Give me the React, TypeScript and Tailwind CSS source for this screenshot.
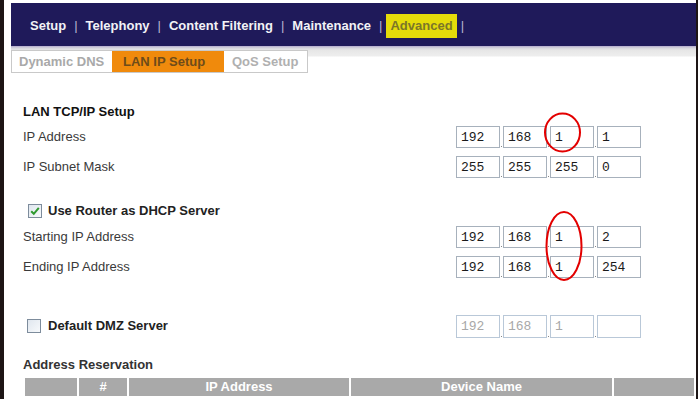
import React from "react";

function IpBox({ v, disabled }: { v: string; disabled?: boolean }) {
  return (
    <div
      className={
        "w-[44px] flex items-center pl-[4px] font-['Liberation_Mono',monospace] text-[13px] leading-none " +
        (disabled
          ? "h-[23px] border border-[#b9c8d8] text-[#a8a8a8]"
          : "h-[22px] border border-[#a7b1bc] text-[#1a1a1a]")
      }
    >
      {v}
    </div>
  );
}

function Dot() {
  return (
    <div className="w-[3px] self-stretch flex items-end justify-center">
      <div className="w-[1px] h-[1px] bg-[#888] mb-[1px]" />
    </div>
  );
}

function Ip({ parts, disabled }: { parts: string[]; disabled?: boolean }) {
  return (
    <div className="flex">
      <IpBox v={parts[0]} disabled={disabled} />
      <Dot />
      <IpBox v={parts[1]} disabled={disabled} />
      <Dot />
      <IpBox v={parts[2]} disabled={disabled} />
      <Dot />
      <IpBox v={parts[3]} disabled={disabled} />
    </div>
  );
}

function Row({ label, parts }: { label: string; parts: string[] }) {
  return (
    <div className="flex h-[30px] items-center">
      <div className="w-[433px] text-[13px] text-[#3a3a3a]">{label}</div>
      <Ip parts={parts} />
    </div>
  );
}

function Check({ checked }: { checked?: boolean }) {
  return (
    <svg width="14" height="14" viewBox="0 0 14 14" className="shrink-0">
      <defs>
        <linearGradient id={checked ? "cg1" : "cg2"} x1="0" y1="0" x2="1" y2="1">
          <stop offset="0" stopColor="#dfe6ee" />
          <stop offset="1" stopColor="#f8fafc" />
        </linearGradient>
      </defs>
      <rect x="0.5" y="0.5" width="13" height="13" fill={`url(#${checked ? "cg1" : "cg2"})`} stroke="#7d8c9c" />
      {checked && (
        <path d="M3.2 7.2 L5.8 9.8 L10.8 3.8" fill="none" stroke="#2f9a2f" strokeWidth="2" />
      )}
    </svg>
  );
}

const navItem = "px-[4px] h-[24px] flex items-center font-bold text-[13px] text-[#f2f2f6]";
const sep = "mx-[4px] text-[13px] text-[#b8b6d4]";

export default function App() {
  return (
    <div className="relative w-[699px] h-[399px] bg-white flex overflow-hidden font-['Liberation_Sans',Arial,sans-serif]">
      <div className="w-[4px] shrink-0 bg-[#1d1515]" />
      <div className="w-[692px] shrink-0 pt-[3px] pl-[7px] flex flex-col">
        {/* header */}
        <div className="h-[43px] bg-[#1f1a5a] flex items-start pt-[11px] pl-[15px]">
          <div className={navItem}>Setup</div>
          <span className={sep + " h-[24px] flex items-center"}>|</span>
          <div className={navItem}>Telephony</div>
          <span className={sep + " h-[24px] flex items-center"}>|</span>
          <div className={navItem}>Content Filtering</div>
          <span className={sep + " h-[24px] flex items-center"}>|</span>
          <div className={navItem}>Maintenance</div>
          <span className={sep + " h-[24px] flex items-center"}>|</span>
          <div className="px-[4px] h-[24px] flex items-center font-bold text-[13px] text-[#7b7628] bg-[#e5dc0a]">
            Advanced
          </div>
          <span className={sep + " h-[24px] flex items-center"}>|</span>
        </div>
        {/* tab band */}
        <div className="h-[30px] bg-[linear-gradient(to_bottom,#b2aacd_0px,#d6d6dc_2px,#e6e6e6_4px,#eeeeee_10px,#ffffff_11px)] pt-[4px]">
          <div className="flex w-[297px] h-[23px] border border-[#c9c9c9] bg-white">
            <div className="w-[100px] pl-[7px] flex items-center font-bold text-[13px] text-[#a9a9a9]">Dynamic DNS</div>
            <div className="w-[112px] pl-[11px] flex items-center font-bold text-[13px] text-[#6e4c1a] bg-[#f08a0c]">LAN IP Setup</div>
            <div className="w-[83px] pl-[8px] flex items-center font-bold text-[13px] text-[#b0b0b0]">QoS Setup</div>
          </div>
        </div>
        {/* content */}
        <div className="pl-[12px] flex flex-col">
          <div className="mt-[26px] h-[20px] leading-[19px] font-bold text-[13px] text-[#111]">LAN TCP/IP Setup</div>
          <Row label="IP Address" parts={["192", "168", "1", "1"]} />
          <Row label="IP Subnet Mask" parts={["255", "255", "255", "0"]} />
          <div className="mt-[18px] h-[22px] flex items-center pl-[5px]">
            <Check checked />
            <span className="ml-[6px] font-bold text-[13px] text-[#222]">Use Router as DHCP Server</span>
          </div>
          <Row label="Starting IP Address" parts={["192", "168", "1", "2"]} />
          <Row label="Ending IP Address" parts={["192", "168", "1", "254"]} />
          <div className="mt-[29px] h-[30px] flex items-center">
            <div className="w-[433px] flex items-center pl-[4px]">
              <Check />
              <span className="ml-[7px] font-bold text-[13px] text-[#222]">Default DMZ Server</span>
            </div>
            <Ip parts={["192", "168", "1", ""]} disabled />
          </div>
          <div className="mt-[15px] h-[18px] leading-[18px] font-bold text-[13px] text-[#333]">Address Reservation</div>
          <div className="mt-[4px] ml-[2px] flex gap-[2px] h-[18px] text-white font-bold text-[13px]">
            <div className="w-[52px] bg-[#a9a9a9]" />
            <div className="w-[48px] bg-[#a9a9a9] flex items-center justify-center">#</div>
            <div className="w-[220px] bg-[#a9a9a9] flex items-center justify-center">IP Address</div>
            <div className="w-[261px] bg-[#a9a9a9] flex items-center justify-center">Device Name</div>
            <div className="w-[80px] bg-[#a9a9a9]" />
          </div>
        </div>
      </div>
      <div className="w-[2px] shrink-0 bg-[#1d1515]" />
      <div className="w-[1px] shrink-0 bg-white" />
      {/* red annotation circles */}
      <svg className="absolute left-0 top-0 pointer-events-none" width="699" height="399">
        <ellipse cx="562.5" cy="132.5" rx="17.5" ry="19" fill="none" stroke="#e30000" strokeWidth="2" />
        <ellipse cx="564" cy="246" rx="17.5" ry="34" fill="none" stroke="#e30000" strokeWidth="2" />
      </svg>
    </div>
  );
}
